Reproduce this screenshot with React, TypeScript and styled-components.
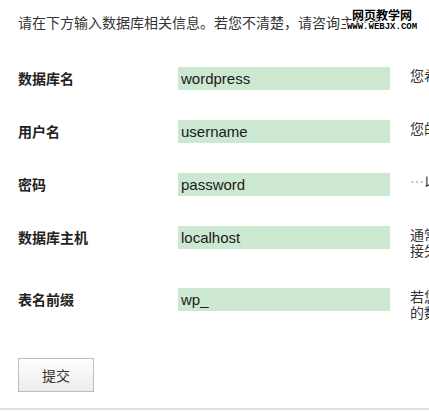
import styled, { createGlobalStyle } from 'styled-components';

const GlobalStyle = createGlobalStyle`
    html, body {
        margin: 0;
        padding: 0;
        background: #fff;
        overflow: hidden;
    }
    body {
        font-family: "Noto Sans CJK SC", "Liberation Sans", sans-serif;
        color: #333;
    }
`;

const Page = styled.div`
    position: relative;
    width: 760px;
    padding: 12px 0 0 18px;
    border-bottom: 2px solid #e0e0e0;
`;

const Intro = styled.p`
    margin: 0 0 20px;
    font-size: 14px;
    line-height: 20px;
    white-space: nowrap;
`;

const Row = styled.div`
    display: grid;
    grid-template-columns: 160px 232px 340px;
    align-items: start;
    padding: 15px 0;
`;

const Label = styled.label`
    font-size: 14px;
    font-weight: bold;
    line-height: 23px;
    color: #222;
`;

const Input = styled.input`
    display: block;
    box-sizing: border-box;
    width: 212px;
    height: 23px;
    margin: 0;
    padding: 0 0 0 3px;
    border: none;
    outline: none;
    background: #cde8d1;
    font-family: "Liberation Sans", Arial, sans-serif;
    font-size: 15px;
    color: #1a1a1a;
`;

const Desc = styled.div`
    font-size: 14px;
    line-height: 16px;
    color: #333;
`;

const Ellipsis = styled.span`
    color: #6f9fd0;
`;

const Actions = styled.p`
    margin: 23px 0 16px;
`;

const SubmitButton = styled.button`
    display: block;
    box-sizing: border-box;
    width: 76px;
    height: 34px;
    border: 1px solid #bdbdbd;
    background: linear-gradient(#ffffff, #ececec);
    font-family: "Noto Sans CJK SC", sans-serif;
    font-size: 14px;
    color: #333;
    padding: 0;
`;

const Watermark = styled.div`
    position: absolute;
    left: 346px;
    top: 9px;
    width: 72px;
    text-align: center;
    line-height: 1;
    text-shadow: 1px 0 0 #fff, -1px 0 0 #fff, 0 1px 0 #fff, 0 -1px 0 #fff;
`;

const WatermarkTitle = styled.div`
    font-family: "Noto Sans CJK SC", sans-serif;
    font-size: 12px;
    font-weight: bold;
    color: #000;
`;

const WatermarkUrl = styled.div`
    margin-top: 2px;
    font-family: "Liberation Mono", monospace;
    font-size: 9px;
    font-weight: bold;
    color: #000;
    background: #fff;
`;

const fields = [
    { label: '数据库名', name: 'dbname', value: 'wordpress', desc: <>您希望将 WordPress 安装到的数据库名称。</> },
    { label: '用户名', name: 'uname', value: 'username', desc: <>您的 MySQL 用户名</> },
    { label: '密码', name: 'pwd', value: 'password', desc: <><Ellipsis>…</Ellipsis>以及 MySQL 密码。</> },
    { label: '数据库主机', name: 'dbhost', value: 'localhost', desc: <>通常是 localhost，若连<br />接失败请联系空间商。</> },
    { label: '表名前缀', name: 'prefix', value: 'wp_', desc: <>若您希望在同一个数据库安装多个 WordPress<br />的数据表，请修改前缀。</> },
];

export default function App() {
    return (
        <>
            <GlobalStyle />
            <Page>
                <Intro>请在下方输入数据库相关信息。若您不清楚，请咨询主机商。</Intro>
                <form onSubmit={e => e.preventDefault()}>
                    {fields.map(f => (
                        <Row key={f.name}>
                            <Label htmlFor={f.name}>{f.label}</Label>
                            <div>
                                <Input id={f.name} name={f.name} defaultValue={f.value} />
                            </div>
                            <Desc>{f.desc}</Desc>
                        </Row>
                    ))}
                    <Actions>
                        <SubmitButton type="submit">提交</SubmitButton>
                    </Actions>
                </form>
                <Watermark>
                    <WatermarkTitle>网页教学网</WatermarkTitle>
                    <WatermarkUrl>WWW.WEBJX.COM</WatermarkUrl>
                </Watermark>
            </Page>
        </>
    )
}
